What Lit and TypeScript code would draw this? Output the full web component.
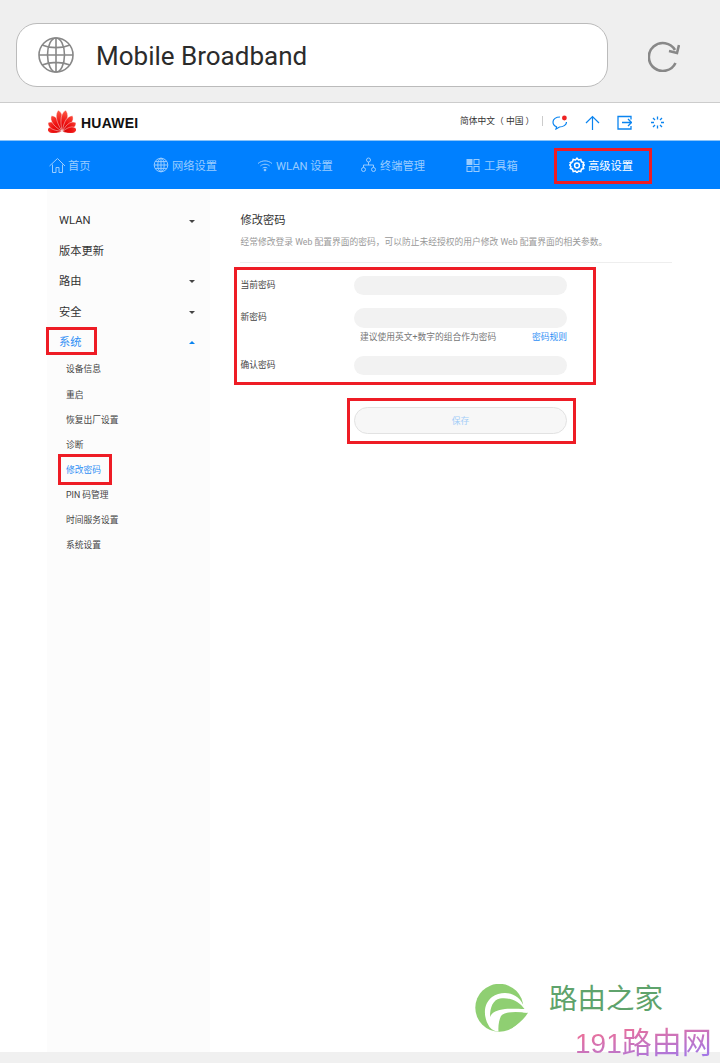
import { LitElement, html, css, svg } from "lit";
import { customElement } from "lit/decorators.js";

const petal = (a: number, l: number) => svg`<path transform="rotate(${a} 14 21.5)" fill="url(#r)" stroke="#fff" stroke-width=".4" d="M14 21C9.5 ${21.5 - l * 0.55} 10 ${21.5 - l * 0.85} 14 ${21.5 - l}C18 ${21.5 - l * 0.85} 18.5 ${21.5 - l * 0.55} 14 21Z"/>`;

const navIcons: Record<string, unknown> = {
  home: svg`<path d="M.5 9 8.5 1.5 16 9M3.5 7.5V15.5H7V10.5H10V15.5H13.5V7.5"/>`,
  globe: svg`<circle cx="8" cy="8" r="6.8"/><ellipse cx="8" cy="8" rx="3.2" ry="6.8"/><path d="M8 1.2V14.8M1.2 8H14.8M2.2 4.6H13.8M2.2 11.4H13.8"/>`,
  wifi: svg`<path d="M1 6.5C5 3 11 3 15 6.5M3.4 8.9C6 6.7 10 6.7 12.6 8.9M5.7 11.1C7 10.1 9 10.1 10.3 11.1"/><circle cx="8" cy="13" r=".9" fill="currentColor"/>`,
  tree: svg`<circle cx="7.5" cy="3" r="2"/><circle cx="2.5" cy="12.5" r="2"/><circle cx="12.5" cy="12.5" r="2"/><path d="M7.5 5V8M2.5 10.5V8H12.5V10.5"/>`,
  grid: svg`<rect x="2" y="2.5" width="5" height="5" fill="currentColor"/><rect x="9" y="2.5" width="5" height="5"/><rect x="2" y="9.5" width="5" height="5"/><rect x="9" y="9.5" width="5" height="5"/>`,
  gear: svg`<path stroke-width="1.5" d="M8 1.2 9.5 3 11.8 2.5 12.5 4.8 14.7 5.5 14 7.8 15.2 8 14 9.8 14.7 11.5 12.5 12.2 11.8 14.5 9.5 14 8 15.8 6.5 14 4.2 14.5 3.5 12.2 1.3 11.5 2 9.8.8 8 2 6.2 1.3 5.5 3.5 4.8 4.2 2.5 6.5 3Z"/><circle cx="8" cy="8.5" r="2.4" stroke-width="1.5"/>`,
};

const nav = [
  ["home", "首页"],
  ["globe", "网络设置"],
  ["wifi", "WLAN 设置"],
  ["tree", "终端管理"],
  ["grid", "工具箱"],
  ["gear", "高级设置"],
];

const side: [string, string, boolean][] = [
  ["WLAN", "down", false],
  ["版本更新", "", false],
  ["路由", "down", false],
  ["安全", "down", false],
  ["系统", "up", true],
];

const sub = ["设备信息", "重启", "恢复出厂设置", "诊断", "修改密码", "PIN 码管理", "时间服务设置", "系统设置"];

@customElement("app-root")
export class AppRoot extends LitElement {
  static styles = css`
    :host {
      display: block;
      position: relative;
      width: 720px;
      height: 1063px;
      overflow: hidden;
      background: #fff;
      font-family: Roboto, "Noto Sans CJK SC", sans-serif;
      color: #333;
    }
    .top {
      box-sizing: border-box;
      height: 103px;
      background: #efefef;
      border-bottom: 1px solid #ccc;
      padding: 23px 40px 0 16px;
      display: flex;
      align-items: flex-start;
      justify-content: space-between;
    }
    .pill {
      box-sizing: border-box;
      width: 592px;
      height: 64px;
      background: #fff;
      border: 1px solid #bbb;
      border-radius: 21px;
      display: flex;
      align-items: center;
      padding-left: 21px;
      gap: 22px;
      font-size: 26px;
      color: #2b2b2b;
    }
    .pill span { margin-top: 1px; }
    .reload { margin-top: 17px; }
    .head {
      height: 37px;
      display: flex;
      align-items: center;
      padding: 0 55px 0 48px;
    }
    .logo { display: flex; align-items: center; gap: 5px; margin-top: -1px; }
    .brand {
      font-family: "Liberation Sans", sans-serif;
      font-weight: 700;
      font-size: 14px;
      color: #111;
      margin-top: 3px;
      letter-spacing: 0.25px;
    }
    .tools { margin-left: auto; display: flex; align-items: center; margin-top: 1px; color: #0a84f0; }
    .lang { font-size: 8.75px; color: #333; width: 82px; white-space: nowrap; margin-top: -4px; }
    .sep { width: 1px; height: 10px; background: #ccc; margin: -3px 9px 0 0; }
    .tools svg { display: block; }
    .tools svg + svg { margin-left: 17.5px; }
    .tools svg:last-child { margin-left: 18px; }
    .line { height: 1px; background: #8cc4f8; }
    .nav {
      height: 48px;
      background: #0080ff;
      display: flex;
      padding-left: 49px;
    }
    .nav-item {
      width: 104px;
      display: flex;
      align-items: center;
      gap: 3px;
      font-size: 11.25px;
      color: #99ccff;
    }
    .nav-item.on { color: #fff; }
    .nav-item svg { flex: none; }
    .main { display: flex; height: 863px; }
    .side {
      box-sizing: border-box;
      margin-left: 47px;
      width: 163px;
      padding-top: 16px;
      background: #fcfcfc;
    }
    .row {
      height: 30.2px;
      display: flex;
      align-items: center;
      justify-content: space-between;
      padding: 0 15.5px 0 12px;
      font-size: 11.25px;
      color: #333;
    }
    .row.on { color: #2f8ff5; }
    .arrow { width: 0; height: 0; border-left: 3.5px solid transparent; border-right: 3.5px solid transparent; margin-top: 3px; }
    .arrow.down { border-top: 3.5px solid #444; }
    .arrow.up { border-bottom: 3.5px solid #0a84f0; }
    .sub {
      height: 25.1px;
      display: flex;
      align-items: center;
      padding-left: 19px;
      font-size: 8.75px;
      color: #444;
    }
    .sub:nth-child(6) { margin-top: 0.5px; }
    .sub.on { color: #2f8ff5; }
    .content { width: 432px; margin-left: 30px; padding-top: 24px; }
    .title { font-size: 11.25px; line-height: 16px; color: #333; padding-left: 0.5px; }
    .desc { font-size: 8.75px; line-height: 14px; color: #999; margin-top: 6px; white-space: nowrap; padding-left: 0.5px; }
    .rule { height: 1px; background: #eee; margin-top: 13px; }
    .form {
      display: grid;
      grid-template-columns: 114px 213px;
      margin-top: 13px;
      font-size: 8.75px;
      color: #444;
    }
    .label { line-height: 19px; padding-left: 0.5px; }
    .input { background: #f2f2f2; border-radius: 10px; height: 19px; }
    .input.tall { height: 20px; }
    .gap { grid-column: 1 / 3; height: 13px; }
    .hint {
      grid-column: 2;
      display: flex;
      justify-content: space-between;
      padding-left: 6px;
      line-height: 19px;
      height: 28px;
      color: #777;
    }
    .hint a { color: #2f8ff5; }
    .save {
      box-sizing: border-box;
      margin: 32px 0 0 114px;
      width: 213px;
      height: 27px;
      background: #f7f7f7;
      border: 1px solid #e2e2e2;
      border-radius: 14px;
      display: flex;
      align-items: center;
      justify-content: center;
      font-size: 8.75px;
      color: #a3cdf7;
    }
    .foot { height: 11px; background: #f0f0f0; }
    .mark { position: absolute; box-sizing: border-box; border: 3px solid #ee1c25; }
    .m1 { left: 554px; top: 148px; width: 98px; height: 36px; }
    .m2 { left: 46px; top: 327px; width: 51px; height: 28px; }
    .m3 { left: 58px; top: 454px; width: 54px; height: 31px; }
    .m4 { left: 234px; top: 267px; width: 362px; height: 118px; }
    .m5 { left: 347px; top: 398px; width: 229px; height: 46px; }
    .wm { position: absolute; left: 475px; top: 984px; display: flex; align-items: flex-start; gap: 20px; }
    .wm-text { font-size: 28.5px; line-height: 32px; color: #5fa36c; white-space: nowrap; }
    .wm2 {
      position: absolute;
      left: 575px;
      top: 1024px;
      font-size: 30px;
      line-height: 38px;
      white-space: nowrap;
      font-family: "Liberation Sans", "Noto Sans CJK SC", sans-serif;
      background: linear-gradient(170deg, #e8709c 20%, #a478e6 85%);
      -webkit-background-clip: text;
      background-clip: text;
      color: transparent;
    }
    .wm2 b { font-weight: 400; font-size: 28px; }
  `;

  render() {
    return html`
      <div class="top">
        <div class="pill">
          <svg width="36" height="36" viewBox="0 0 36 36" fill="none" stroke="#888" stroke-width="1.6">
            <circle cx="18" cy="18" r="17"/><ellipse cx="18" cy="18" rx="8.5" ry="17"/>
            <path d="M18 1V35M1 18H35M4 8C12 11.5 24 11.5 32 8M4 28C12 24.5 24 24.5 32 28"/>
          </svg>
          <span>Mobile Broadband</span>
        </div>
        <svg class="reload" width="32" height="32" viewBox="0 0 32 32" fill="none" stroke="#888" stroke-width="2.6">
          <path d="M27.5 23A14 14 0 1 1 27 10"/><path d="M31 5 29 13 21 11"/>
        </svg>
      </div>
      <div class="head">
        <div class="logo">
          <svg width="28" height="23" viewBox="0 0 28 23">
            <defs><linearGradient id="r" gradientUnits="userSpaceOnUse" x1="14" y1="0" x2="14" y2="22"><stop offset="0" stop-color="#ff5c48"/><stop offset=".55" stop-color="#ee1010"/><stop offset="1" stop-color="#d00000"/></linearGradient></defs>
            ${[[-82, 15], [-58, 16.5], [-34, 19], [-10, 21.5], [10, 21.5], [34, 19], [58, 16.5], [82, 15]].map(([a, l]) => petal(a, l))}
          </svg>
          <span class="brand">HUAWEI</span>
        </div>
        <div class="tools">
          <span class="lang">简体中文（ 中国 ）</span>
          <span class="sep"></span>
          <svg width="15" height="15" viewBox="0 0 15 15" fill="none" stroke="currentColor" stroke-width="1.2">
            <path d="M8 2C4 2 1 4 1 7c0 2.5 1.5 4 3.5 4.8L4 14l3.5-2C11 12 14.5 10 14.5 7"/><circle cx="12.4" cy="3" r="2.4" fill="#ee2222" stroke="none"/>
          </svg>
          <svg width="15" height="15" viewBox="0 0 15 15" fill="none" stroke="currentColor" stroke-width="1.2">
            <path d="M7.5 15V1.5M1 8 7.5 1.5 14 8"/>
          </svg>
          <svg width="15" height="15" viewBox="0 0 15 15" fill="none" stroke="currentColor" stroke-width="1.3">
            <path d="M14 4.5V1.5H1V14H14V11M5 7.5H14.5M11 4 14.5 7.5 11 11"/>
          </svg>
          <svg width="15" height="15" viewBox="0 0 15 15" fill="none" stroke="currentColor" stroke-width="1.3">
            <path d="M7.5 1.5V4.5M7.5 10.5V13.5M1 7.5H4M11 7.5H14M3 3 5 5M10 10 12 12M12 3 10 5M5 10 3 12"/>
          </svg>
        </div>
      </div>
      <div class="line"></div>
      <div class="nav">
        ${nav.map(
          ([ic, t], i) => html`
            <div class="nav-item ${i === 5 ? "on" : ""}">
              <svg width="16" height="16" viewBox="0 0 16 16" fill="none" stroke="currentColor" stroke-width="1">${navIcons[ic]}</svg>
              <span>${t}</span>
            </div>
          `
        )}
      </div>
      <div class="main">
        <div class="side">
          ${side.map(
            ([t, a, on]) => html`<div class="row ${on ? "on" : ""}"><span>${t}</span>${a ? html`<i class="arrow ${a}"></i>` : ""}</div>`
          )}
          ${sub.map((t, i) => html`<div class="sub ${i === 4 ? "on" : ""}">${t}</div>`)}
        </div>
        <div class="content">
          <div class="title">修改密码</div>
          <div class="desc">经常修改登录 Web 配置界面的密码，可以防止未经授权的用户修改 Web 配置界面的相关参数。</div>
          <div class="rule"></div>
          <div class="form">
            <div class="label">当前密码</div><div class="input"></div>
            <div class="gap"></div>
            <div class="label">新密码</div><div class="input tall"></div>
            <div class="hint"><span>建议使用英文+数字的组合作为密码</span><a>密码规则</a></div>
            <div class="label">确认密码</div><div class="input"></div>
          </div>
          <div class="save">保存</div>
        </div>
      </div>
      <div class="foot"></div>
      <div class="mark m1"></div>
      <div class="mark m2"></div>
      <div class="mark m3"></div>
      <div class="mark m4"></div>
      <div class="mark m5"></div>
      <div class="wm">
        <svg width="54" height="49" viewBox="0 0 54 49">
          <circle cx="24.3" cy="23.8" r="24" fill="#8fcf72"/>
          <path fill="#8fcf72" d="M53 28.7 44 28 36 44.5C44 40 50 34 53 28.7Z"/>
          <path fill="#fff" d="M14.5 43C8 33 8 20 17 13 27 6 44 7 49.5 24L52.5 28.7C42 27.5 30 27 26 32 24 36 23 42 23.5 47.5 20 47.5 16.5 45.5 14.5 43Z"/>
          <path fill="#8fcf72" d="M49.5 25C44 17 34 13 25 14.5 18 16 15 23 15 33 17 28 22 26 30 25 37 24.5 44 25 49.5 25Z"/>
        </svg>
        <span class="wm-text">路由之家</span>
      </div>
      <div class="wm2"><b>191</b>路由网</div>
    `;
  }
}
